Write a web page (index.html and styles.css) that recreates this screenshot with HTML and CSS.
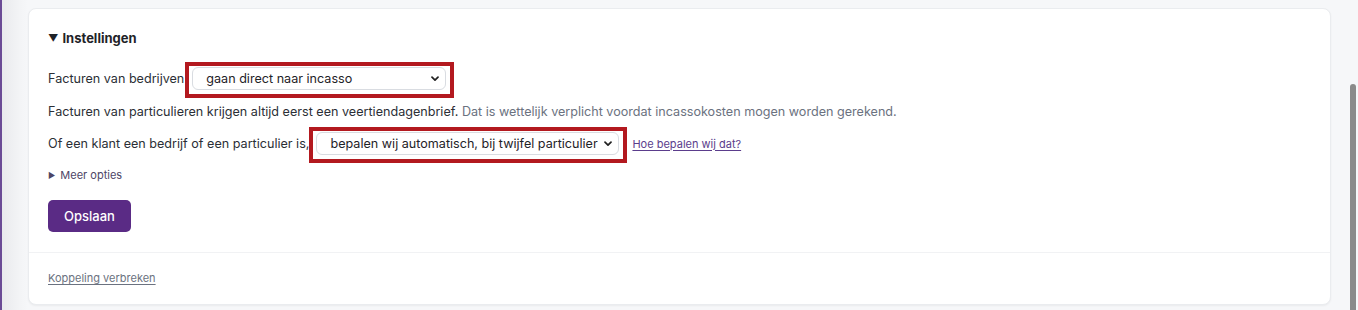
FILE: index.html
```html
<!DOCTYPE html>
<html lang="nl">
<head>
<meta charset="utf-8">
<title>Instellingen</title>
<link rel="stylesheet" href="styles.css">
</head>
<body>
<div class="page">
  <section class="card">
    <div class="card-body">
      <div class="heading"><span class="caret">▼</span>Instellingen</div>
      <div class="row row-1">
        <label class="label">Facturen van bedrijven</label>
        <span class="hl hl-1">
          <select class="select select-1">
            <option>gaan direct naar incasso</option>
          </select>
        </span>
      </div>
      <p class="row row-2">Facturen van particulieren krijgen altijd eerst een veertiendagenbrief. <span class="muted">Dat is wettelijk verplicht voordat incassokosten mogen worden gerekend.</span></p>
      <div class="row row-3">
        <label class="label">Of een klant een bedrijf of een particulier is,</label>
        <span class="hl hl-2">
          <select class="select select-2">
            <option>bepalen wij automatisch, bij twijfel particulier</option>
          </select>
        </span>
        <a class="help-link" href="#">Hoe bepalen wij dat?</a>
      </div>
      <div class="more"><span class="caret-small">▶</span>Meer opties</div>
      <button class="btn">Opslaan</button>
    </div>
    <div class="card-footer">
      <a class="unlink" href="#">Koppeling verbreken</a>
    </div>
  </section>
  <div class="scrollbar"></div>
</div>
</body>
</html>
```
FILE: styles.css
```css
html, body {
  margin: 0;
  padding: 0;
  height: 100%;
  overflow: hidden;
}
body {
  font-family: Inter, "Noto Sans", "Liberation Sans", sans-serif;
  font-size: 12.6px;
  color: #2b2f36;
  background: #f6f7f9;
}
.page {
  position: relative;
  height: 310px;
  box-sizing: border-box;
  border-left: 2px solid #6b4b96;
  background: linear-gradient(to right, #e9eaed 0px, #f3f4f6 18px, #f6f7f9 26px);
  padding: 8px 27px 0 26px;
}
.card {
  background: #fff;
  border: 1px solid #eaecef;
  border-radius: 8px;
  box-shadow: 0 1px 2px rgba(0, 0, 0, 0.05);
  height: 297px;
  box-sizing: border-box;
  display: flex;
  flex-direction: column;
}
.card-body {
  padding: 21px 19px 20px;
  display: flex;
  flex-direction: column;
  align-items: flex-start;
  border-bottom: 1px solid #f1f2f4;
}
.heading {
  font-weight: 700;
  font-size: 13px;
  line-height: 16px;
  color: #1f2328;
  display: flex;
  align-items: center;
}
.caret {
  font-size: 10px;
  margin-right: 4px;
}
.row {
  margin: 0;
  display: flex;
  align-items: center;
  line-height: 16px;
}
.row-1 { margin-top: 21px; }
.row-2 { margin-top: 14px; display: block; }
.row-3 { margin-top: 12px; }
.label { white-space: nowrap; }
.muted { color: #6b7280; }
.hl {
  position: relative;
  display: inline-flex;
  margin-left: 8px;
}
.hl-2 { margin-left: 7px; }
.hl::after {
  content: "";
  position: absolute;
  top: -5px;
  right: -8px;
  bottom: -8px;
  left: -7px;
  border: 4px solid #b3191f;
  pointer-events: none;
}
.select {
  -webkit-appearance: none;
  appearance: none;
  font-family: inherit;
  font-size: 12.6px;
  color: #1f2328;
  height: 23px;
  margin: 0;
  padding: 0 20px 0 13px;
  border: 1px solid #d9dce1;
  border-radius: 6px;
  background-color: #fff;
  background-image: url("data:image/svg+xml;utf8,<svg xmlns='http://www.w3.org/2000/svg' width='8' height='6' viewBox='0 0 8 6'><path d='M1 1.2 L4 4.2 L7 1.2' fill='none' stroke='%23222' stroke-width='1.7' stroke-linecap='round' stroke-linejoin='round'/></svg>");
  background-repeat: no-repeat;
  background-position: right 6px center;
}
.select-1 { width: 254px; }
.select-2 { width: 303px; }
.help-link {
  margin-left: 13px;
  font-size: 11px;
  color: #5b3d8c;
  text-decoration: underline;
  text-underline-offset: 2px;
}
.more {
  margin-top: 13px;
  font-size: 11px;
  line-height: 14px;
  color: #4d4566;
  display: flex;
  align-items: center;
}
.caret-small {
  font-size: 8px;
  margin-right: 5px;
}
.btn {
  margin-top: 18px;
  width: 83px;
  height: 32px;
  border: 0;
  border-radius: 5px;
  background: #5a2b85;
  color: #fff;
  font-family: inherit;
  font-size: 13px;
  font-weight: 500;
}
.card-footer {
  padding: 18px 19px 0;
  line-height: 14px;
}
.unlink {
  font-size: 11px;
  color: #6b7280;
  text-decoration: underline;
  text-underline-offset: 2px;
}
.scrollbar {
  position: absolute;
  left: 1348px;
  top: 84px;
  width: 6px;
  height: 240px;
  border-radius: 3px;
  background: #8a8a8a;
}
```
